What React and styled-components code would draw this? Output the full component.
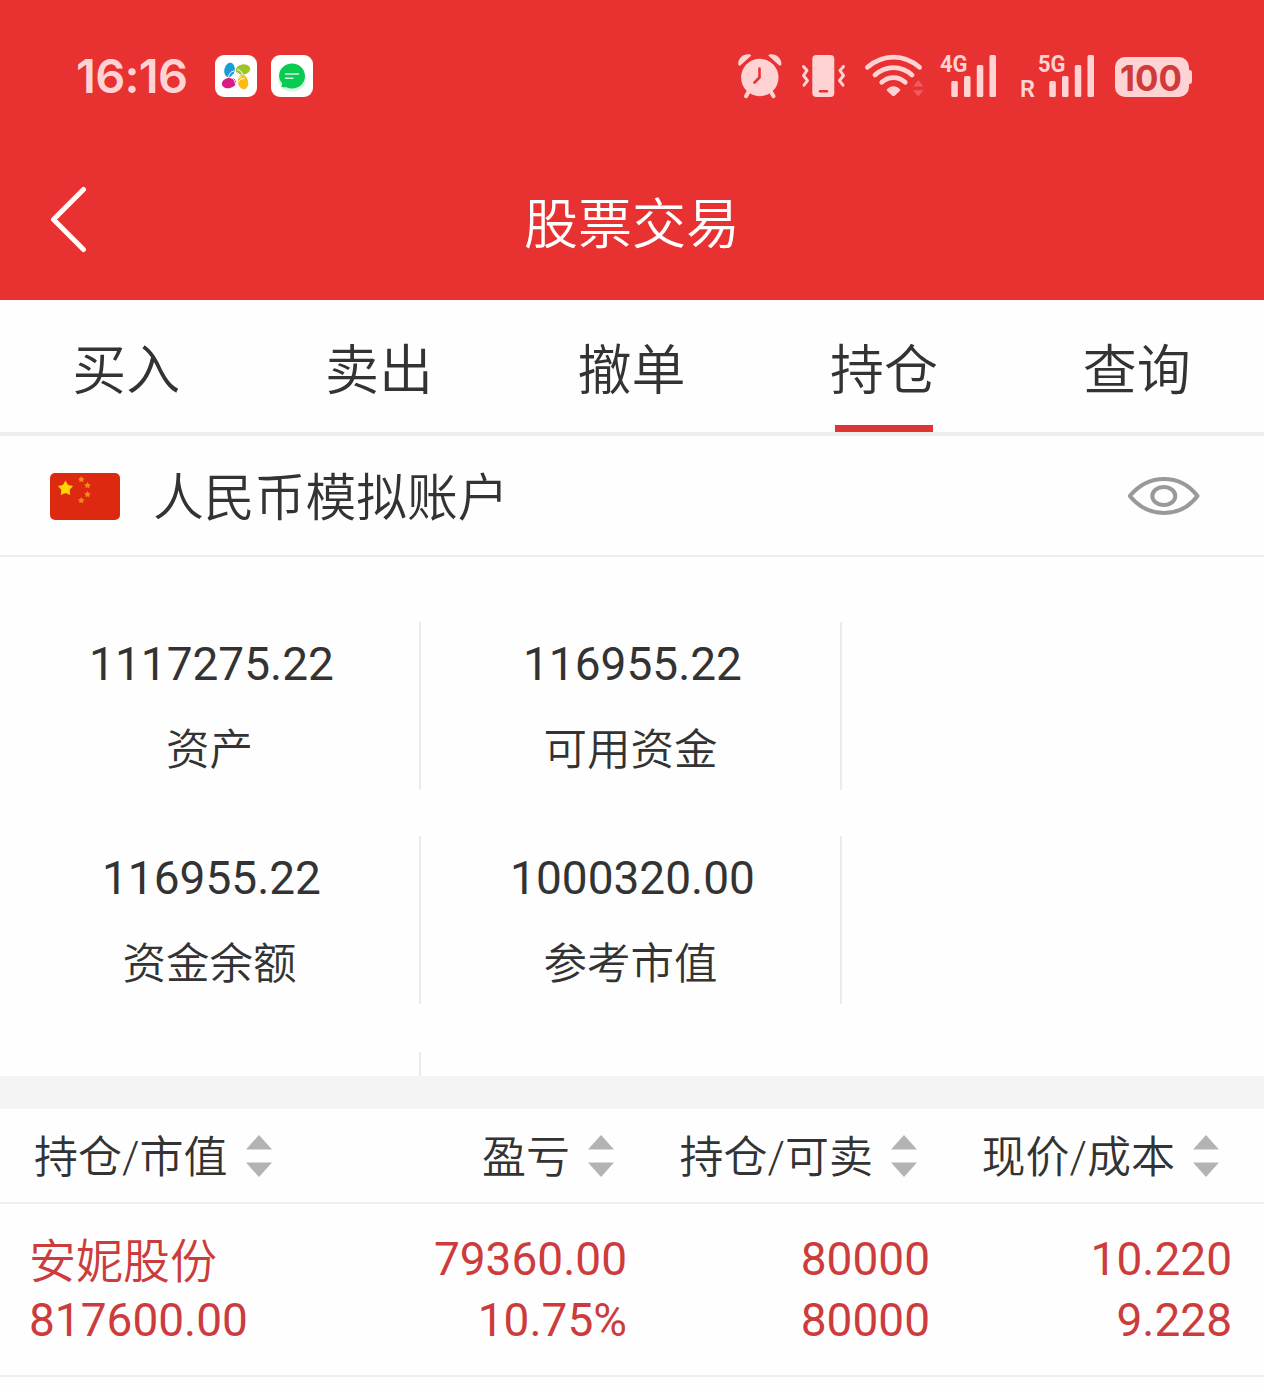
import styled, { createGlobalStyle } from 'styled-components';

const GlobalStyle = createGlobalStyle`
  body {
    margin: 0;
    background: #fff;
    color: #333;
    font-family: Roboto, "Noto Sans CJK SC", sans-serif;
  }
`;

const Page = styled.div`
  width: 1264px;
  height: 1392px;
  overflow: hidden;
  background: #fefefe;
`;

const Header = styled.header`
  height: 300px;
  background: #e83131;
  color: #fff;
`;

const StatusBar = styled.div`
  display: flex;
  align-items: flex-start;
  justify-content: space-between;
  height: 100px;
  padding: 52px 72px 0 76px;
  box-sizing: border-box;
`;

const StatusGroup = styled.div`
  display: flex;
  align-items: flex-start;
`;

const Clock = styled.div`
  width: 139px;
  font-family: Inter, Roboto, sans-serif;
  font-size: 47px;
  line-height: 48px;
  font-weight: 600;
  letter-spacing: -0.7px;
  white-space: nowrap;
  color: #ffd3d3;
`;

const StatusIcon = styled.svg`
  display: block;
  flex: none;
  width: ${p => p.$w}px;
  height: 48px;
  margin-right: ${p => p.$gap || 0}px;
  overflow: visible;
`;

const BatteryText = styled.text`
  font-family: Inter, Roboto, sans-serif;
  font-size: 35.5px;
  font-weight: 700;
  fill: #d03a3a;
`;

const NavBar = styled.div`
  display: grid;
  grid-template-columns: 120px 1fr 120px;
  align-items: center;
  height: 200px;
`;

const BackButton = styled.button`
  width: 120px;
  height: 100px;
  margin-top: 40px;
  padding: 0 0 0 46px;
  border: 0;
  background: none;
  text-align: left;
`;

const Title = styled.h1`
  margin: 51px 0 0;
  font-size: 54px;
  line-height: 80px;
  font-weight: 350;
  text-align: center;
`;

const Tabs = styled.nav`
  display: grid;
  grid-template-columns: repeat(5, 1fr);
  height: 132px;
  padding-right: 1px;
  border-bottom: 4px solid #eee;
`;

const Tab = styled.div`
  display: flex;
  flex-direction: column;
  align-items: center;
  justify-content: space-between;
  padding-top: 32px;
  font-size: 54px;
  line-height: 80px;
  font-weight: 350;

  &::after {
    content: "";
    width: 98px;
    height: 7px;
    background: ${p => (p.$active ? '#dd3434' : 'transparent')};
  }
`;

const Account = styled.section`
  display: flex;
  align-items: center;
  height: 118px;
  padding: 1px 63px 0 50px;
  border-bottom: 2px solid #eee;
`;

const AccountName = styled.div`
  flex: 1;
  margin: 5px 0 0 33px;
  font-size: 50.8px;
  line-height: 80px;
  font-weight: 350;
`;

const Metrics = styled.section`
  display: grid;
  grid-template-columns: repeat(3, 421px);
  grid-template-rows: 168px 168px 168px;
  row-gap: 46px;
  height: 519px;
  padding-top: 65px;
  box-sizing: border-box;
  overflow: hidden;
`;

const Metric = styled.div`
  display: flex;
  flex-direction: column;
  align-items: center;
  margin-top: ${p => (p.$empty ? 2 : 0)}px;
  border-right: 2px solid ${p => (p.$line ? '#ebebeb' : 'transparent')};
`;

const MetricValue = styled.div`
  margin-top: 10px;
  padding-left: 4px;
  font-size: 46px;
  line-height: 64px;
`;

const MetricLabel = styled.div`
  margin-top: 23px;
  font-size: 43.5px;
  line-height: 64px;
  font-weight: 350;
`;

const Gap = styled.div`
  height: 33px;
  background: #f4f4f4;
`;

const TableRow = styled.div`
  display: grid;
  grid-template-columns: 295px 302px 303px 302px;
  padding-left: 30px;
  border-bottom: 2px solid #eee;
`;

const HeadRow = styled(TableRow)`
  height: 93px;
  align-items: center;
`;

const HeadCell = styled.div`
  display: flex;
  align-items: center;
  justify-content: ${p => (p.$left ? 'flex-start' : 'flex-end')};
  gap: 18px;
  padding: ${p => (p.$left ? '0 0 0 4px' : '0 13px 0 0')};
  font-size: 44px;
  line-height: 64px;
  white-space: nowrap;
`;

const HeadLabel = styled.span`
  padding-top: 4px;
  font-weight: 350;
`;

const HoldingRow = styled(TableRow)`
  height: 171px;
  color: #cd3c3c;
`;

const Cell = styled.div`
  display: flex;
  flex-direction: column;
  align-items: ${p => (p.$left ? 'flex-start' : 'flex-end')};
  margin-left: ${p => (p.$left ? -1 : 0)}px;
  padding-top: 25px;
  font-size: 46px;
  line-height: 61px;
`;

const StockName = styled.div`
  height: 61px;
  font-size: 47px;
  line-height: 65px;
  font-weight: 350;
`;

const Sorter = () => (
  <svg width="26" height="42" viewBox="0 0 26 42" fill="#b3b3b3">
    <path d="M13 0 26 14.5H0Z" />
    <path d="M13 42 0 27.5H26Z" />
  </svg>
);

const PINK = '#ffd3d3';

const PinwheelIcon = () => (
  <StatusIcon $w={42} $gap={14} viewBox="215 52 42 48">
    <rect x="215" y="55" width="42" height="42" rx="9" fill="#fff" />
    <ellipse cx="229.500" cy="70" rx="5.200" ry="7.300" transform="rotate(12 229.500 70)" fill="#1a9cd8" />
    <ellipse cx="243" cy="69.500" rx="7.300" ry="5.200" transform="rotate(-10 243 69.500)" fill="#9cc52c" />
    <ellipse cx="229" cy="83" rx="7.300" ry="5.200" transform="rotate(-12 229 83)" fill="#d81c84" />
    <ellipse cx="243" cy="82" rx="5.200" ry="7.300" transform="rotate(-12 243 82)" fill="#fabb14" />
    <g fill="none" stroke="#fff" strokeWidth="1">
      <path d="M228.500 77q1-5.500 5.500-6M231.500 78q0-3.500 3-4" />
      <path d="M237 69.500q5 1 5.500 5.500M236.500 72.500q2.500.5 3 3" />
      <path d="M230 77.500q5 1 5.500 7M232.500 77q3 1 4 4" />
      <path d="M237.500 83q2-4.500 7-5M236.500 80q1.500-2.500 5-3.500" />
    </g>
  </StatusIcon>
);

const MessageIcon = () => (
  <StatusIcon $w={42} viewBox="271 52 42 48">
    <rect x="271" y="55" width="42" height="42" rx="9" fill="#fff" />
    <ellipse cx="292" cy="80" rx="14" ry="11.500" fill="#d9f8e3" />
    <path d="M292 63.500c7.300 0 13 5.500 13 12.500s-5.700 12.500-13 12.500c-2 0-4-.4-5.500-1.200-2 .2-3.500-.1-5.300-.8.8-.8 1-1.800.9-3A12.300 12.300 0 0 1 279 76c0-7 5.700-12.500 13-12.500z" fill="#08cb52" />
    <path d="M285.500 74h13M285.500 78.200h7.500" stroke="#d3f8df" strokeWidth="1.500" strokeLinecap="round" />
  </StatusIcon>
);

const AlarmIcon = () => (
  <StatusIcon $w={44} $gap={19} viewBox="738 52 44 48">
    <circle cx="759.800" cy="77.500" r="18.700" fill={PINK} />
    <path d="M749 91l-3 5.200M770.500 91l3 5.200" stroke={PINK} strokeWidth="4" strokeLinecap="round" />
    <path d="M738.300 64.500c-.8-6 5.500-11.500 12-10 .8.300 1 1 .5 1.600l-10 9c-1 .9-2.300.7-2.500-.6zM781.300 64.500c.8-6-5.500-11.500-12-10-.8.300-1 1-.5 1.600l10 9c1 .9 2.300.7 2.500-.6z" fill={PINK} />
    <path d="M759.500 68.500v9l-5 5" fill="none" stroke="#e83131" strokeWidth="2.600" strokeLinecap="round" strokeLinejoin="round" />
  </StatusIcon>
);

const VibrateIcon = () => (
  <StatusIcon $w={46} $gap={18} viewBox="801 52 46 48">
    <rect x="812.300" y="55" width="22" height="42" rx="4" fill={PINK} />
    <path d="M820 91.300h7" stroke="#e83131" strokeWidth="2.400" strokeLinecap="round" />
    <path d="M803.500 66.500l3.500 4-3.500 5 4 5.200-3.500 4.500M843.500 66.500l-3.500 4 3.500 5-4 5.200 3.500 4.500" fill="none" stroke={PINK} strokeWidth="3" strokeLinecap="round" strokeLinejoin="round" />
  </StatusIcon>
);

const WifiIcon = () => (
  <StatusIcon $w={60} $gap={15} viewBox="865 52 60 48">
    <g fill="none" stroke={PINK} strokeWidth="4.800" strokeLinecap="round">
      <path d="M867.500 67.300c15.500-13.500 36.500-13.500 52 0" />
      <path d="M875 75c11-9.800 26-9.800 37 0" />
      <path d="M881.800 82.300c7-6.200 16.400-6.200 23.400 0" />
    </g>
    <path d="M887 89.300c3.800-4.200 9.200-4.200 13 0 .3.400.3 1 0 1.400l-5.300 5c-.7.600-1.700.6-2.400 0l-5.300-5c-.4-.4-.4-1 0-1.400z" fill={PINK} />
    <path d="M918.300 80l5.200 6.500h-10.500zM918.300 96.500l-5.300-6.300h10.500z" fill="#f15b5b" />
  </StatusIcon>
);

const SignalIcon = ({ x, label, roaming, gap }) => (
  <StatusIcon $w={roaming ? 75 : 58} $gap={gap} viewBox={`${roaming ? x - 17 : x} 52 ${roaming ? 75 : 58} 48`} fill={PINK}>
    <text x={x} y="72" fontSize="24.500" fontWeight="700" textLength="27.500" lengthAdjust="spacingAndGlyphs">{label}</text>
    {roaming && <text x={x - 18} y="96.800" fontSize="24.500" fontWeight="600" textLength="15" lengthAdjust="spacingAndGlyphs">R</text>}
    <rect x={x + 11.300} y="81" width="6.500" height="16" rx="1.500" />
    <rect x={x + 24} y="76" width="6.500" height="21" rx="1.500" />
    <rect x={x + 36.800} y="65" width="6.500" height="32" rx="1.500" />
    <rect x={x + 49.500} y="55" width="6.500" height="42" rx="1.500" />
  </StatusIcon>
);

const BatteryIcon = () => (
  <StatusIcon $w={77} viewBox="1115 52 77 48">
    <rect x="1115" y="57" width="74" height="40" rx="10" fill={PINK} />
    <path d="M1187 70h2.500q2.500 0 2.500 3v8q0 3-2.500 3h-2.500z" fill={PINK} />
    <BatteryText x="1120" y="91" textLength="62" lengthAdjust="spacingAndGlyphs">100</BatteryText>
  </StatusIcon>
);

const star = (cx, cy, r) =>
  Array.from({ length: 10 }, (_, i) => {
    const a = (Math.PI / 5) * i - Math.PI / 2;
    const d = i % 2 ? r * 0.55 : r;
    return `${cx + d * Math.cos(a)},${cy + d * Math.sin(a)}`;
  }).join(' ');

const Flag = () => (
  <svg width="70" height="47" viewBox="0 0 70 47">
    <rect width="70" height="47" rx="5" fill="#dc2910" />
    <polygon points={star(15.5, 15.5, 8)} fill="#ffd500" />
    <g fill="#f48a1c">
      <polygon points={star(31.3, 6.5, 3.4)} />
      <polygon points={star(37.5, 12.5, 3.4)} />
      <polygon points={star(37.5, 21.5, 3.4)} />
      <polygon points={star(31.3, 27.5, 3.4)} />
    </g>
  </svg>
);

const Eye = () => (
  <svg width="74" height="40" viewBox="0 0 74 40" fill="none" stroke="#999" strokeWidth="4">
    <path d="M2.800 20C12 9 24 3 37 3s25 6 33.500 17C62 31 50 37 37 37S12 31 2.800 20z" strokeLinejoin="round" />
    <ellipse cx="36.800" cy="20" rx="11.500" ry="9" />
  </svg>
);

const tabs = ['买入', '卖出', '撤单', '持仓', '查询'];

const metrics = [
  ['1117275.22', '资产'],
  ['116955.22', '可用资金'],
  null,
  ['116955.22', '资金余额'],
  ['1000320.00', '参考市值'],
  null,
  [],
];

const columns = ['持仓/市值', '盈亏', '持仓/可卖', '现价/成本'];

const holding = {
  name: '安妮股份',
  marketValue: '817600.00',
  figures: [
    ['79360.00', '10.75%'],
    ['80000', '80000'],
    ['10.220', '9.228'],
  ],
};

export default function App() {
  return (
    <Page>
      <GlobalStyle />
      <Header>
        <StatusBar>
          <StatusGroup>
            <Clock>16:16</Clock>
            <PinwheelIcon />
            <MessageIcon />
          </StatusGroup>
          <StatusGroup>
            <AlarmIcon />
            <VibrateIcon />
            <WifiIcon />
            <SignalIcon x={940} label="4G" gap={23} />
            <SignalIcon x={1038} label="5G" roaming gap={19} />
            <BatteryIcon />
          </StatusGroup>
        </StatusBar>
        <NavBar>
          <BackButton aria-label="返回">
            <svg width="44" height="68" viewBox="0 0 44 68" fill="none" stroke="#fff" strokeWidth="5" strokeLinecap="round" strokeLinejoin="round">
              <path d="M37.500 4.500 7.500 34.500l30 30" />
            </svg>
          </BackButton>
          <Title>股票交易</Title>
        </NavBar>
      </Header>

      <Tabs>
        {tabs.map(t => <Tab key={t} $active={t === '持仓'}>{t}</Tab>)}
      </Tabs>

      <Account>
        <Flag />
        <AccountName>人民币模拟账户</AccountName>
        <Eye />
      </Account>

      <Metrics>
        {metrics.map((m, i) => (
          <Metric key={i} $line={!!m} $empty={!m || !m.length}>
            {m && <MetricValue>{m[0]}</MetricValue>}
            {m && <MetricLabel>{m[1]}</MetricLabel>}
          </Metric>
        ))}
      </Metrics>

      <Gap />

      <HeadRow>
        {columns.map((c, i) => (
          <HeadCell key={c} $left={i === 0}>
            <HeadLabel>{c}</HeadLabel>
            <Sorter />
          </HeadCell>
        ))}
      </HeadRow>
      <HoldingRow>
        <Cell $left>
          <StockName>{holding.name}</StockName>
          <div>{holding.marketValue}</div>
        </Cell>
        {holding.figures.map(([top, bottom], i) => (
          <Cell key={i}>
            <div>{top}</div>
            <div>{bottom}</div>
          </Cell>
        ))}
      </HoldingRow>
    </Page>
  );
}
